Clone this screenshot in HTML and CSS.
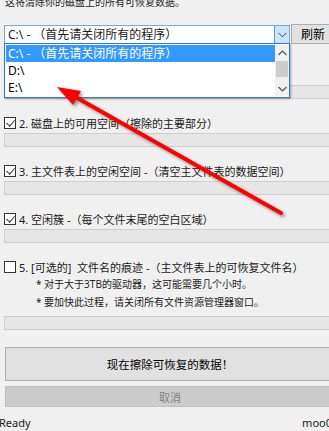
FILE: index.html
```html
<!DOCTYPE html>
<html lang="zh-CN">
<head>
<meta charset="utf-8">
<title>擦除可恢复的数据</title>
<link rel="stylesheet" href="styles.css">
</head>
<body>
<div class="window">
  <p class="intro">这将清除你的磁盘上的所有可恢复数据。</p>

  <div class="drive-row">
    <div class="combo">
      <span class="combo-value">C:\ - （首先请关闭所有的程序）</span>
      <span class="combo-btn">
        <svg width="9" height="6" viewBox="0 0 9 6"><path d="M0.5 0.8 L4.5 4.8 L8.5 0.8" fill="none" stroke="#444" stroke-width="1"/></svg>
      </span>
      <div class="combo-list">
        <ul class="items">
          <li class="item selected">C:\ - （首先请关闭所有的程序）</li>
          <li class="item">D:\</li>
          <li class="item">E:\</li>
        </ul>
        <div class="scrollbar">
          <svg class="sb-arrow" width="9" height="6" viewBox="0 0 9 6"><path d="M0.5 5 L4.5 1 L8.5 5" fill="none" stroke="#555" stroke-width="1.2"/></svg>
          <div class="sb-track"><div class="sb-thumb"></div></div>
          <svg class="sb-arrow" width="9" height="6" viewBox="0 0 9 6"><path d="M0.5 1 L4.5 5 L8.5 1" fill="none" stroke="#555" stroke-width="1.2"/></svg>
        </div>
      </div>
    </div>
    <button class="btn refresh">刷新</button>
  </div>

  <div class="options">
    <div class="option">
      <div class="opt-row"><span class="check on"></span></div>
      <div class="bar"></div>
    </div>
    <div class="option">
      <label class="opt-row"><span class="check on"></span><span>2. 磁盘上的可用空间（擦除的主要部分）</span></label>
      <div class="bar"></div>
    </div>
    <div class="option">
      <label class="opt-row"><span class="check on"></span><span>3. 主文件表上的空闲空间 -（清空主文件表的数据空间）</span></label>
      <div class="bar"></div>
    </div>
    <div class="option">
      <label class="opt-row"><span class="check on"></span><span>4. 空闲簇 -（每个文件末尾的空白区域）</span></label>
      <div class="bar"></div>
    </div>
    <div class="option last">
      <label class="opt-row"><span class="check"></span><span>5. [可选的]&nbsp; 文件名的痕迹 -（主文件表上的可恢复文件名）</span></label>
      <p class="note">* 对于大于3TB的驱动器，这可能需要几个小时。</p>
      <p class="note">* 要加快此过程，请关闭所有文件资源管理器窗口。</p>
      <div class="bar bar-last"></div>
    </div>
  </div>

  <button class="btn wipe">现在擦除可恢复的数据！</button>
  <button class="btn cancel" disabled>取消</button>

  <div class="status">
    <span class="status-left">Ready</span>
    <span class="status-right">moo0</span>
  </div>
</div>

<svg class="annot" width="329" height="431" viewBox="0 0 329 431">
  <g class="arrow">
    <line x1="281" y1="213" x2="72" y2="95" stroke="#ff0000" stroke-width="3.8" stroke-linecap="round"/>
    <polygon points="57,87 81,91 73,105" fill="#ff0000"/>
  </g>
</svg>
</body>
</html>
```

FILE: styles.css
```css
* { box-sizing: border-box; }

html, body {
  margin: 0;
  padding: 0;
  width: 329px;
  height: 431px;
  overflow: hidden;
  background: #f0f0f0;
}

body {
  position: relative;
  font-family: "Noto Sans", "Noto Sans CJK SC", sans-serif;
  font-size: 11px;
  color: #1a1a1a;
}

.window {
  width: 336px;
  padding-left: 4px;
  display: flex;
  flex-direction: column;
}

.intro {
  margin: -6px 0 0 1px;
  height: 16px;
  line-height: 16px;
  font-size: 10px;
  white-space: nowrap;
}

.drive-row {
  display: flex;
  margin-top: 15px;
  height: 19px;
}

.combo {
  position: relative;
  width: 286px;
  height: 19px;
  background: #fff;
  border: 1px solid #7aa7d8;
  display: flex;
  align-items: center;
}

.combo-value {
  flex: 1;
  padding-left: 3px;
  font-size: 12px;
  line-height: 17px;
  white-space: nowrap;
  overflow: hidden;
}

.combo-btn {
  width: 15px;
  height: 17px;
  background: #cce4f7;
  border-left: 1px solid #569de5;
  display: flex;
  align-items: center;
  justify-content: center;
}

.combo-list {
  position: absolute;
  left: -1px;
  top: 17px;
  width: 286px;
  height: 55px;
  background: #fff;
  border: 1px solid #2e7bd0;
  box-shadow: 1px 1px 2px rgba(0, 0, 0, 0.35);
  display: flex;
  padding: 1px 0 1px 1px;
  z-index: 5;
}

.items {
  list-style: none;
  margin: 0;
  padding: 0;
  flex: 1;
}

.item {
  height: 17px;
  line-height: 17px;
  padding-left: 2px;
  font-size: 12px;
  white-space: nowrap;
  overflow: hidden;
  color: #000;
}

.item.selected {
  background: #3399ff;
  color: #fff;
}

.scrollbar {
  width: 14px;
  background: #f0f0f0;
  display: flex;
  flex-direction: column;
  align-items: center;
  padding: 5px 0 4px;
}

.sb-track {
  flex: 1;
  width: 100%;
  padding: 5px 1px 0;
}

.sb-thumb {
  height: 16px;
  background: #cdcdcd;
}

.btn {
  font-family: "Noto Sans", "Noto Sans CJK SC", sans-serif;
  font-size: 11px;
  background: #e1e1e1;
  border: 1px solid #adadad;
  color: #000;
  padding: 0;
  margin: 0;
}

.refresh {
  margin-left: 1px;
  width: 44px;
  height: 20px;
  margin-top: -1px;
  font-size: 12px;
}

.options {
  display: flex;
  flex-direction: column;
  margin-top: 23px;
}

.option {
  display: flex;
  flex-direction: column;
  margin-bottom: 16px;
}

.option.last { margin-bottom: 0; }

.opt-row {
  display: flex;
  align-items: center;
  height: 16px;
  gap: 3px;
  white-space: nowrap;
}

.check {
  width: 12px;
  height: 12px;
  border: 1px solid #333;
  background: #fff;
  flex: none;
  position: relative;
}

.check.on::after {
  content: "";
  position: absolute;
  left: 3px;
  top: 0px;
  width: 4px;
  height: 7px;
  border-right: 1.3px solid #333;
  border-bottom: 1.3px solid #333;
  transform: rotate(40deg);
}

.bar {
  margin-top: 2px;
  width: 330px;
  height: 14px;
  background: #e6e6e6;
  border: 1px solid #cdcdcd;
}

.note {
  margin: 0 0 0 32px;
  height: 18px;
  line-height: 18px;
  font-size: 10px;
  color: #222;
  white-space: nowrap;
}

.bar-last { margin-top: 5px; }

.wipe {
  margin: 17px 0 0 1px;
  width: 330px;
  height: 34px;
  font-size: 11.5px;
}

.cancel {
  margin: 5px 0 0 1px;
  width: 330px;
  height: 21px;
  background: #cccccc;
  border-color: #bfbfbf;
  color: #838383;
}

.status {
  display: flex;
  justify-content: space-between;
  margin: 7px 0 0 -5px;
  width: 333px;
  height: 18px;
  line-height: 18px;
  font-size: 11px;
}

.annot {
  position: absolute;
  left: 0;
  top: 0;
  pointer-events: none;
  z-index: 10;
}

.arrow {
  filter: drop-shadow(2px 2px 1.5px rgba(0, 0, 0, 0.4));
}
```
